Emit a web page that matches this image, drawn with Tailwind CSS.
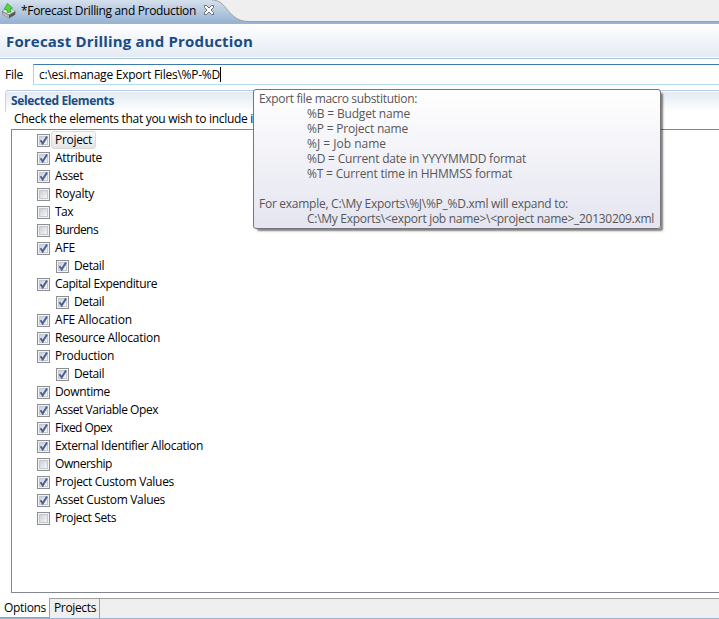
<!DOCTYPE html>
<html lang="en">
<head>
<meta charset="utf-8">
<title>Forecast Drilling and Production</title>
<script src="https://cdn.jsdelivr.net/npm/@tailwindcss/browser@4"></script>
</head>
<body class="w-[719px] h-[619px] overflow-hidden bg-white text-black text-[12px] leading-[18px] font-['Open_Sans','Noto_Sans',sans-serif]">
<div class="relative flex h-[619px] w-[719px] flex-col">
  <header class="relative h-[24px] shrink-0 bg-[#efefef]">
    <svg class="absolute left-0 top-0" width="719" height="24" viewBox="0 0 719 24">
      <defs><linearGradient id="tab" x1="0" y1="0" x2="0" y2="1"><stop offset="0" stop-color="#d5e0ec"/><stop offset="0.9" stop-color="#9ab5d4"/><stop offset="1" stop-color="#99b4d1"/></linearGradient></defs>
      <path d="M0 0H212C228 0 227 21.500 249 21.500H719V24H0Z" fill="url(#tab)"/>
      <path d="M212 0C228 0 227 21.500 249 21.500H719" fill="none" stroke="#a0a0a0"/>
    </svg>
    <div class="relative flex h-[22px] items-center">
      <svg class="ml-[1px] shrink-0" width="16" height="16" viewBox="0 0 16 16">
        <path d="M1 8L7 4.500L14.500 8V11.500L8 15.500L1 11.500Z" fill="#777b7b"/>
        <path d="M1.500 8L7 5L14 8L8 11.500Z" fill="#e4e6e6"/>
        <path d="M1.500 9L8 12.500V15L1.500 11.500Z" fill="#b9bcbc"/>
        <path d="M8 12.500L14 9V11.500L8 15Z" fill="#505757"/>
        <path d="M6.500 0.500L11.500 5L9.500 5.500L10 9L6.500 9.500L5.500 6.500L3 6.500Z" fill="#53d934" stroke="#249b24" stroke-width=".7"/>
      </svg>
      <span data-w="175" class="ml-[4px] whitespace-pre">*Forecast Drilling and Production</span>
      <svg class="absolute left-[203px] top-[4px]" width="12" height="12" viewBox="0 0 12 12"><path d="M1.500 1.500H3.500L6 4L8.500 1.500H10.500V3.500L8 6L10.500 8.500V10.500H8.500L6 8L3.500 10.500H1.500V8.500L4 6L1.500 3.500Z" fill="#fff" stroke="#6a6f76"/></svg>
    </div>
  </header>
  <div class="flex h-[35px] shrink-0 items-center border-b border-[#a9c0da] bg-linear-to-b from-white to-[#e3eaf3] pl-[6px] shadow-[inset_0_-1px_0_#fff]">
    <h1 data-w="247" data-font="bold 15px" class="whitespace-pre text-[15px] font-bold text-[#1b4b83]">Forecast Drilling and Production</h1>
  </div>
  <div class="mt-[5px] flex h-[21px] shrink-0">
    <label class="w-[33px] pl-[5px] pt-[2px]"><span data-w="18" class="inline-block whitespace-pre">File</span></label>
    <div class="flex flex-1 items-center border-y border-l border-b-[#b5dcec] border-l-[#b5cfe7] border-t-[#3d7bad] pl-[5px]">
      <span data-w="181" class="whitespace-pre">c:\esi.manage Export Files\%P-%D</span><span class="h-[15px] w-px bg-black"></span>
    </div>
  </div>
  <section class="ml-[5px] mt-[5px] h-[39px] shrink-0 rounded-tl-[3px] border-t border-[#b9cae2]">
    <div class="h-[21px] rounded-tl-[3px] border-l border-[#c9d6e8] bg-linear-to-b from-[#e1e9f2] to-white pl-[5px] pt-[1px] shadow-[inset_0_1px_0_#fff]">
      <h2 data-w="103" data-font="bold 12px" class="inline-block whitespace-pre font-bold text-[#1b4b83]">Selected Elements</h2>
    </div>
    <p class="-mt-[2px] pl-[9px]"><span data-w="239" class="inline-block whitespace-pre">Check the elements that you wish to include i</span></p>
  </section>
  <div id="tree" class="ml-[11px] h-[464px] shrink-0 border-y border-l border-[#828790] pt-[1px]"></div>
  <footer class="mt-[5px] flex h-[20px] shrink-0 bg-[#efefef]">
    <div class="w-[49px] border-b border-[#a0a0a0] bg-white pl-[4px]"><span data-w="42" class="mt-[1px] inline-block whitespace-pre">Options</span></div>
    <div class="w-[51px] border-x border-t border-[#a0a0a0] pl-[4px]"><span data-w="42" class="inline-block whitespace-pre">Projects</span></div>
    <div class="flex-1 border-t border-[#a0a0a0]"></div>
  </footer>
  <div class="h-px bg-[#99b4d1]"></div>
  <div id="tip" class="absolute left-[253px] top-[89px] h-[140px] w-[408px] rounded-[3px] border border-[#767676] bg-linear-to-b from-white to-[#e4e5f0] pl-[5px] pt-[1px] leading-[15px] text-[#575757] shadow-[3px_3px_2px_-1px_rgba(0,0,0,0.5)]"></div>
</div>
<script>
const rows = [["Project",37,1],["Attribute",47,1],["Asset",28,1],["Royalty",39,0],["Tax",18,0],["Burdens",43,0],["AFE",20,1],["Detail",30,1,1],["Capital Expenditure",102,1],["Detail",30,1,1],["AFE Allocation",77,1],["Resource Allocation",105,1],["Production",59,1],["Detail",30,1,1],["Downtime",55,1],["Asset Variable Opex",103,1],["Fixed Opex",57,1],["External Identifier Allocation",148,1],["Ownership",57,0],["Project Custom Values",119,1],["Asset Custom Values",110,1],["Project Sets",61,0]];
const tree = document.getElementById("tree");
rows.forEach(([name, width, checked, child], i) => {
  const row = document.createElement("div");
  row.className = "flex h-[18px] items-center " + (child ? "pl-[44px]" : "pl-[25px]");
  row.innerHTML = `<span class="flex h-[13px] w-[13px] items-center justify-center border border-[#8e8f8f] bg-[#f4f4f4] relative"><span class="h-[9px] w-[9px] border border-[#c5c9cf] bg-linear-to-br from-[#cbcfd5] to-[#f6f6f6]"></span>${checked ? '<svg class="absolute left-[1px] top-[0px]" width="10" height="11" viewBox="0 0 10 11"><path d="M1.500 5.200L3.700 8.500L8 1.500" fill="none" stroke="#4a5f97" stroke-width="2"/></svg>' : ""}</span><span class="ml-[1px] flex h-[18px] items-center rounded-[3px] border px-[3px] ${i === 0 ? "border-[#d9d9d9] bg-linear-to-b from-[#f8f8f8] to-[#e5e5e5]" : "border-transparent"}"><span data-w="${width}" class="whitespace-pre">${name}</span></span>`;
  tree.append(row);
});
const help = [["Export file macro substitution:",158],["%B = Budget name",103,1],["%P = Project name",101,1],["%J = Job name",79,1],["%D = Current date in YYYYMMDD format",219,1],["%T = Current time in HHMMSS format",205,1],["",0],["For example, C:\\My Exports\\%J\\%P_%D.xml will expand to:",309],["C:\\My Exports\\<export job name>\\<project name>_20130209.xml",347,1]];
help.forEach(([text, width, indent]) => {
  const line = document.createElement("div");
  line.className = "h-[15px] whitespace-pre " + (indent ? "pl-[48px]" : "");
  if (text) {
    const span = document.createElement("span");
    span.textContent = text;
    span.dataset.w = width;
    line.append(span);
  }
  document.getElementById("tip").append(line);
});
const ctx = document.createElement("canvas").getContext("2d");
document.querySelectorAll("[data-w]").forEach(el => {
  ctx.font = (el.dataset.font || "12px") + ' "Open Sans"';
  const text = el.textContent;
  el.style.letterSpacing = (el.dataset.w - ctx.measureText(text).width) / text.length + "px";
});
</script>
</body>
</html>
